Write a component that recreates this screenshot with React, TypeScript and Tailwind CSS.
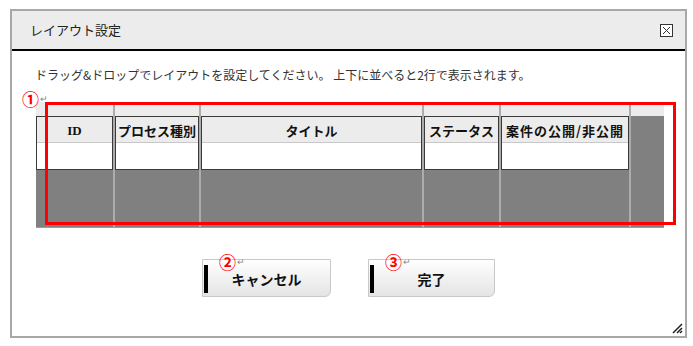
import React from 'react';

const jp = { fontFamily: '"Noto Sans CJK JP", "Liberation Sans", sans-serif' };

type Col = { w: number; label?: string; serif?: boolean; wide?: boolean };

const columns: Col[] = [
  { w: 77, label: 'ID', serif: true },
  { w: 84, label: 'プロセス種別' },
  { w: 221, label: 'タイトル' },
  { w: 75, label: 'ステータス' },
  { w: 128, label: '案件の公開/非公開', wide: true },
  { w: 33 },
];

function CloseIcon() {
  return (
    <svg width="13" height="13" viewBox="0 0 13 13" aria-hidden="true">
      <rect x="0.5" y="0.5" width="12" height="12" fill="white" stroke="#333" />
      <path d="M3 3l7 7M10 3l-7 7" stroke="#333" strokeWidth="1" />
    </svg>
  );
}

function Mark({ n }: { n: string }) {
  return (
    <span className="flex items-start leading-none">
      <span className="text-[17px] font-bold text-[#ff0000] leading-none">{n}</span>
      <span className="text-[9px] text-[#888] ml-[1px] mt-[4px] leading-none">↵</span>
    </span>
  );
}

function LayoutTable() {
  return (
    <div className="relative ml-[24px] mt-[19px] w-[628px] h-[126px]">
      <div className="flex gap-[2px] h-full bg-[#acacac] border-b border-[#9c9c9c]">
        {columns.map((c, i) => (
          <div key={i} className="flex flex-col" style={{ width: c.w }}>
            <div className="h-[14px] bg-[#ececec]" />
            {c.label && (
              <div className="h-[54px] border border-[#3a3a3a] flex flex-col bg-white">
                <div
                  className={`h-[26px] bg-[#ececec] border-b border-[#c8c8c8] flex items-end justify-center pb-[2px] text-[13px] font-bold text-[#111] whitespace-nowrap ${c.wide ? 'tracking-[1px]' : ''}`}
                  style={c.serif ? { fontFamily: '"Liberation Serif", serif' } : jp}
                >
                  {c.label}
                </div>
                <div className="flex-1 bg-white" />
              </div>
            )}
            <div className="flex-1 bg-[#808080]" />
          </div>
        ))}
      </div>
      <div className="absolute left-[9px] top-0 w-[631px] h-[123px] border-[3px] border-[#ff0000]" />
      <div className="absolute left-[-14px] top-[-12px]">
        <Mark n="①" />
      </div>
    </div>
  );
}

function DialogButton({ label, mark, width }: { label: string; mark: string; width: string }) {
  return (
    <div
      className={`relative h-[38px] ${width} border border-[#c8c8c8] rounded-br-[6px] bg-linear-to-b from-white to-[#e4e4e4] flex items-center justify-center`}
    >
      <div className="absolute left-[1px] top-[5px] w-[4px] h-[28px] bg-black" />
      <span className="text-[14px] font-bold text-[#111] leading-[16px] mt-[1px]" style={jp}>
        {label}
      </span>
      <div className="absolute left-[16px] top-[-7px]">
        <Mark n={mark} />
      </div>
    </div>
  );
}

export default function App() {
  return (
    <div className="w-[693px] h-[346px] bg-white pt-[9px] pl-[10px]" style={jp}>
      <div className="relative w-[677px] h-[329px] border-2 border-[#a8a8a8] flex flex-col">
        <div className="h-[40px] bg-[#ececec] border-b-2 border-black flex items-center justify-between pl-[18px] pr-[12px]">
          <span className="text-[13px] text-[#222]">レイアウト設定</span>
          <CloseIcon />
        </div>
        <p className="pl-[23px] pt-[16px] text-[12px] leading-[16px] text-[#333]">
          ドラッグ&ドロップでレイアウトを設定してください。 上下に並べると2行で表示されます。
        </p>
        <LayoutTable />
        <div className="flex justify-center gap-[37px] mt-[31px]">
          <DialogButton label="キャンセル" mark="②" width="w-[129px]" />
          <DialogButton label="完了" mark="③" width="w-[127px]" />
        </div>
        <svg
          className="absolute right-[2px] bottom-[2px]"
          width="12"
          height="12"
          viewBox="0 0 12 12"
          aria-hidden="true"
        >
          <path d="M11 2L2 11M11 6L6 11M11 9L9 11" stroke="#222" strokeWidth="1.5" />
        </svg>
      </div>
    </div>
  );
}
